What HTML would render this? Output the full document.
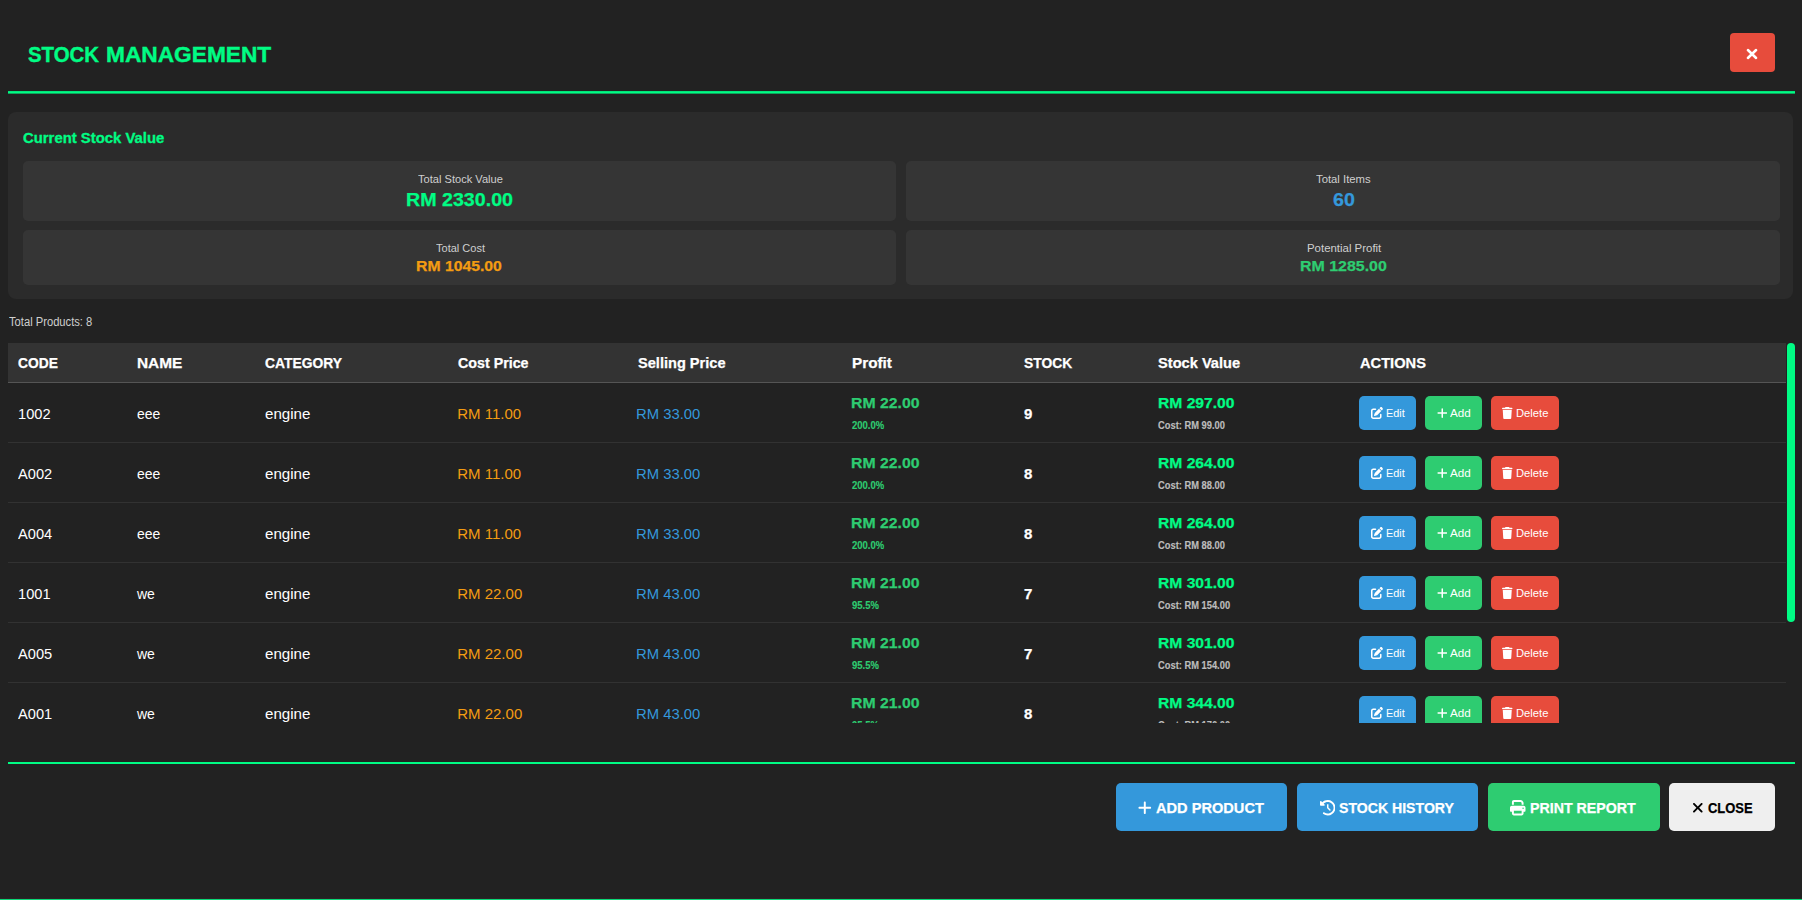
<!DOCTYPE html>
<html lang="en"><head><meta charset="utf-8"><title>Stock Management</title>
<style>
*{box-sizing:border-box;margin:0;padding:0}
html,body{width:1802px;height:900px;overflow:hidden;background:#222222}
body{font-family:"Liberation Sans",sans-serif;color:#fff;position:relative}
.abs{position:absolute}
.t{position:absolute;white-space:nowrap;color:#fff;transform-origin:0 0}
.title{font-size:21.5px;line-height:30px;font-weight:700;color:#00fc84;-webkit-text-stroke:0.4px #00fc84}
.ptitle{font-size:14.5px;line-height:20px;font-weight:700;color:#00fc84;-webkit-text-stroke:0.3px #00fc84}
.lab{font-size:11.5px;line-height:14px;color:#cfcfcf}
.vbig{-webkit-text-stroke:0.25px;font-size:19px;line-height:24px;font-weight:700}
.vsm{-webkit-text-stroke:0.25px;font-size:14.5px;line-height:18px;font-weight:700}
.tp{font-size:12px;line-height:14px;color:#cfcfcf}
.th{-webkit-text-stroke:0.25px;font-size:15px;line-height:18px;font-weight:700}
.cell{font-size:15px;line-height:18px}
.cellb{-webkit-text-stroke:0.25px;font-size:15px;line-height:18px;font-weight:700}
.pv{-webkit-text-stroke:0.25px;font-size:15px;line-height:18px;font-weight:700}
.pp{-webkit-text-stroke:0.15px;font-size:10px;line-height:12px;font-weight:700}
.bt{z-index:2;font-size:11.5px;line-height:14px}
.fbt{-webkit-text-stroke:0.25px;font-size:15px;line-height:18px;font-weight:700}
.box{position:absolute}
</style></head><body>
<span id="title" class="t title" style="left:28.00px;top:40px;transform:scaleX(0.948)">STOCK</span>
<span id="title2" class="t title" style="left:105.74px;top:40px;transform:scaleX(1.056)">MANAGEMENT</span>
<div class="box" style="left:1729.8px;top:33px;width:45.6px;height:39.2px;background:#e74c3c;border-radius:4px"></div>
<svg class="abs" viewBox="0 0 12 12" style="left:1746.1px;top:47.6px;width:12px;height:12px"><path d="M1.9 2L10.1 10M10.1 2L1.9 10" stroke="#fff" stroke-width="2.5" stroke-linecap="round" fill="none"/></svg>
<div class="box" style="left:8px;top:91px;width:1787px;height:3px;background:linear-gradient(to bottom,#03e47b 0,#03e47b 1px,#00fc84 1px,#00fc84 2px,#0ea45d 2px,#0ea45d 3px)"></div>
<div class="box" style="left:8px;top:112.4px;width:1785.2px;height:187px;background:#2b2b2b;border-radius:8px"></div>
<div class="box" style="left:22.5px;top:161px;width:873.5px;height:60px;background:#353535;border-radius:5px"></div>
<div class="box" style="left:906px;top:161px;width:873.5px;height:60px;background:#353535;border-radius:5px"></div>
<div class="box" style="left:22.5px;top:230px;width:873.5px;height:55px;background:#353535;border-radius:5px"></div>
<div class="box" style="left:906px;top:230px;width:873.5px;height:55px;background:#353535;border-radius:5px"></div>
<span id="ptitle" class="t ptitle" style="left:22.58px;top:128px;transform:scaleX(1.025)">Current Stock Value</span>
<span id="l1" class="t lab" style="left:417.96px;top:172px;transform:scaleX(0.965)">Total Stock Value</span>
<span id="l2" class="t lab" style="left:1316.46px;top:172px;transform:scaleX(0.983)">Total Items</span>
<span id="l3" class="t lab" style="left:435.92px;top:241px;transform:scaleX(0.959)">Total Cost</span>
<span id="l4" class="t lab" style="left:1306.50px;top:241px;transform:scaleX(0.993)">Potential Profit</span>
<span id="v1" class="t vbig" style="left:405.82px;top:188px;transform:scaleX(1.034);color:#00fc84">RM 2330.00</span>
<span id="v2" class="t vbig" style="left:1332.92px;top:188px;transform:scaleX(1.037);color:#3498db">60</span>
<span id="v3" class="t vsm" style="left:416.36px;top:257px;transform:scaleX(1.087);color:#f39c12">RM 1045.00</span>
<span id="v4" class="t vsm" style="left:1300.24px;top:257px;transform:scaleX(1.099);color:#2ecc71">RM 1285.00</span>
<span id="tp" class="t tp" style="left:8.58px;top:315px;transform:scaleX(0.932)">Total Products: 8</span>
<div class="box" style="left:8px;top:343px;width:1778px;height:380px;overflow:hidden">
<div class="box" style="left:-8px;top:-343px;width:1802px;height:900px">
<div class="box" style="left:8px;top:343px;width:1778px;height:40px;background:#333333;border-bottom:1px solid #555555"></div>
<span id="th0" class="t th" style="left:18.04px;top:354px;transform:scaleX(0.920)">CODE</span>
<span id="th1" class="t th" style="left:136.50px;top:354px;transform:scaleX(1.027)">NAME</span>
<span id="th2" class="t th" style="left:264.96px;top:354px;transform:scaleX(0.924)">CATEGORY</span>
<span id="th3" class="t th" style="left:458.00px;top:354px;transform:scaleX(0.950)">Cost Price</span>
<span id="th4" class="t th" style="left:637.92px;top:354px;transform:scaleX(0.972)">Selling Price</span>
<span id="th5" class="t th" style="left:851.50px;top:354px;transform:scaleX(1.020)">Profit</span>
<span id="th6" class="t th" style="left:1023.96px;top:354px;transform:scaleX(0.922)">STOCK</span>
<span id="th7" class="t th" style="left:1157.92px;top:354px;transform:scaleX(0.975)">Stock Value</span>
<span id="th8" class="t th" style="left:1360.00px;top:354px;transform:scaleX(0.977)">ACTIONS</span>
<div class="box" style="left:8px;top:442px;width:1778px;height:1px;background:#323232"></div>
<span id="r0c0" class="t cell" style="left:18.20px;top:405px;transform:scaleX(0.975)">1002</span>
<span id="r0c1" class="t cell" style="left:136.50px;top:405px;transform:scaleX(0.933)">eee</span>
<span id="r0c2" class="t cell" style="left:264.96px;top:405px;transform:scaleX(1.009)">engine</span>
<span id="r0c3" class="t cell" style="left:457.20px;top:405px;color:#f39c12">RM 11.00</span>
<span id="r0c4" class="t cell" style="left:636.32px;top:405px;transform:scaleX(0.989);color:#3498db">RM 33.00</span>
<span id="r0c5" class="t pv" style="left:850.70px;top:394px;transform:scaleX(1.054);color:#2ecc71">RM 22.00</span>
<span id="r0c6" class="t pp" style="left:851.50px;top:420px;transform:scaleX(0.949);color:#2ecc71">200.0%</span>
<span id="r0c7" class="t cellb" style="left:1024.00px;top:405px">9</span>
<span id="r0c8" class="t pv" style="left:1157.92px;top:394px;transform:scaleX(1.042);color:#00fc84">RM 297.00</span>
<span id="r0c9" class="t pp" style="left:1157.92px;top:420px;transform:scaleX(0.933);color:#bdbdbd">Cost: RM 99.00</span>
<span id="r0c10" class="t bt" style="left:1386.20px;top:405.5px;transform:scaleX(0.945)">Edit</span>
<div class="box" style="left:1359.2px;top:396px;width:57.2px;height:33.5px;background:#3498db;border-radius:5px"></div>
<svg class="abs" viewBox="0 0 512 512" style="left:1370.8px;top:407px;width:12px;height:12px;fill:#fff" preserveAspectRatio="none"><path d="M471.600 21.700c-21.900-21.900-57.300-21.900-79.200 0L362.300 51.700l97.900 97.900 30.100-30.100c21.900-21.900 21.900-57.300 0-79.200L471.600 21.700zm-299.200 220c-6.100 6.100-10.800 13.600-13.500 21.900l-29.600 88.800c-2.900 8.600-.600 18.100 5.800 24.600s15.900 8.700 24.600 5.800l88.800-29.600c8.200-2.700 15.700-7.400 21.900-13.500L437.700 172.300 339.700 74.300 172.400 241.700zM96 64C43 64 0 107 0 160V416c0 53 43 96 96 96H352c53 0 96-43 96-96V320c0-17.700-14.300-32-32-32s-32 14.300-32 32v96c0 17.700-14.300 32-32 32H96c-17.700 0-32-14.300-32-32V160c0-17.700 14.300-32 32-32h96c17.700 0 32-14.300 32-32s-14.300-32-32-32H96z"/></svg>
<div class="box" style="left:1425.1px;top:396px;width:57.1px;height:33.5px;background:#2ecc71;border-radius:5px"></div>
<svg class="abs" viewBox="0 0 448 512" style="left:1436.8px;top:407px;width:10.5px;height:12px;fill:#fff" preserveAspectRatio="none"><path d="M256 80c0-17.700-14.300-32-32-32s-32 14.300-32 32V224H48c-17.700 0-32 14.300-32 32s14.300 32 32 32H192V432c0 17.700 14.300 32 32 32s32-14.300 32-32V288H400c17.700 0 32-14.300 32-32s-14.300-32-32-32H256V80z"/></svg>
<div class="box" style="left:1490.7px;top:396px;width:68.7px;height:33.5px;background:#e74c3c;border-radius:5px"></div>
<svg class="abs" viewBox="0 0 448 512" style="left:1502px;top:407px;width:10.5px;height:12px;fill:#fff" preserveAspectRatio="none"><path d="M135.200 17.700L128 32H32C14.300 32 0 46.300 0 64S14.300 96 32 96H416c17.700 0 32-14.300 32-32s-14.300-32-32-32H320l-7.200-14.300C307.400 6.800 296.300 0 284.200 0H163.800c-12.100 0-23.200 6.800-28.600 17.700zM416 128H32L53.200 467c1.600 25.300 22.600 45 47.900 45H346.900c25.300 0 46.300-19.700 47.900-45L416 128z"/></svg>
<span id="r0c11" class="t bt" style="left:1450.42px;top:405.5px;transform:scaleX(1.016)">Add</span>
<span id="r0c12" class="t bt" style="left:1515.54px;top:405.5px;transform:scaleX(0.974)">Delete</span>
<div class="box" style="left:8px;top:502px;width:1778px;height:1px;background:#323232"></div>
<span id="r1c0" class="t cell" style="left:18.20px;top:465px;transform:scaleX(0.975)">A002</span>
<span id="r1c1" class="t cell" style="left:136.50px;top:465px;transform:scaleX(0.933)">eee</span>
<span id="r1c2" class="t cell" style="left:264.96px;top:465px;transform:scaleX(1.009)">engine</span>
<span id="r1c3" class="t cell" style="left:457.20px;top:465px;color:#f39c12">RM 11.00</span>
<span id="r1c4" class="t cell" style="left:636.32px;top:465px;transform:scaleX(0.989);color:#3498db">RM 33.00</span>
<span id="r1c5" class="t pv" style="left:850.70px;top:454px;transform:scaleX(1.054);color:#2ecc71">RM 22.00</span>
<span id="r1c6" class="t pp" style="left:851.50px;top:480px;transform:scaleX(0.949);color:#2ecc71">200.0%</span>
<span id="r1c7" class="t cellb" style="left:1024.00px;top:465px">8</span>
<span id="r1c8" class="t pv" style="left:1157.92px;top:454px;transform:scaleX(1.042);color:#00fc84">RM 264.00</span>
<span id="r1c9" class="t pp" style="left:1157.92px;top:480px;transform:scaleX(0.933);color:#bdbdbd">Cost: RM 88.00</span>
<span id="r1c10" class="t bt" style="left:1386.20px;top:465.5px;transform:scaleX(0.945)">Edit</span>
<div class="box" style="left:1359.2px;top:456px;width:57.2px;height:33.5px;background:#3498db;border-radius:5px"></div>
<svg class="abs" viewBox="0 0 512 512" style="left:1370.8px;top:467px;width:12px;height:12px;fill:#fff" preserveAspectRatio="none"><path d="M471.600 21.700c-21.900-21.900-57.300-21.900-79.200 0L362.300 51.700l97.900 97.900 30.100-30.100c21.900-21.900 21.900-57.300 0-79.200L471.600 21.700zm-299.200 220c-6.100 6.100-10.800 13.600-13.500 21.900l-29.600 88.800c-2.900 8.600-.600 18.100 5.800 24.600s15.900 8.700 24.600 5.800l88.800-29.600c8.200-2.700 15.700-7.400 21.900-13.500L437.700 172.300 339.700 74.300 172.400 241.700zM96 64C43 64 0 107 0 160V416c0 53 43 96 96 96H352c53 0 96-43 96-96V320c0-17.700-14.300-32-32-32s-32 14.300-32 32v96c0 17.700-14.300 32-32 32H96c-17.700 0-32-14.300-32-32V160c0-17.700 14.300-32 32-32h96c17.700 0 32-14.300 32-32s-14.300-32-32-32H96z"/></svg>
<div class="box" style="left:1425.1px;top:456px;width:57.1px;height:33.5px;background:#2ecc71;border-radius:5px"></div>
<svg class="abs" viewBox="0 0 448 512" style="left:1436.8px;top:467px;width:10.5px;height:12px;fill:#fff" preserveAspectRatio="none"><path d="M256 80c0-17.700-14.300-32-32-32s-32 14.300-32 32V224H48c-17.700 0-32 14.300-32 32s14.300 32 32 32H192V432c0 17.700 14.300 32 32 32s32-14.300 32-32V288H400c17.700 0 32-14.300 32-32s-14.300-32-32-32H256V80z"/></svg>
<div class="box" style="left:1490.7px;top:456px;width:68.7px;height:33.5px;background:#e74c3c;border-radius:5px"></div>
<svg class="abs" viewBox="0 0 448 512" style="left:1502px;top:467px;width:10.5px;height:12px;fill:#fff" preserveAspectRatio="none"><path d="M135.200 17.700L128 32H32C14.300 32 0 46.300 0 64S14.300 96 32 96H416c17.700 0 32-14.300 32-32s-14.300-32-32-32H320l-7.200-14.300C307.400 6.800 296.300 0 284.200 0H163.800c-12.100 0-23.200 6.800-28.600 17.700zM416 128H32L53.200 467c1.600 25.300 22.600 45 47.900 45H346.900c25.300 0 46.300-19.700 47.900-45L416 128z"/></svg>
<span id="r1c11" class="t bt" style="left:1450.42px;top:465.5px;transform:scaleX(1.016)">Add</span>
<span id="r1c12" class="t bt" style="left:1515.54px;top:465.5px;transform:scaleX(0.974)">Delete</span>
<div class="box" style="left:8px;top:562px;width:1778px;height:1px;background:#323232"></div>
<span id="r2c0" class="t cell" style="left:18.20px;top:525px;transform:scaleX(0.975)">A004</span>
<span id="r2c1" class="t cell" style="left:136.50px;top:525px;transform:scaleX(0.933)">eee</span>
<span id="r2c2" class="t cell" style="left:264.96px;top:525px;transform:scaleX(1.009)">engine</span>
<span id="r2c3" class="t cell" style="left:457.20px;top:525px;color:#f39c12">RM 11.00</span>
<span id="r2c4" class="t cell" style="left:636.32px;top:525px;transform:scaleX(0.989);color:#3498db">RM 33.00</span>
<span id="r2c5" class="t pv" style="left:850.70px;top:514px;transform:scaleX(1.054);color:#2ecc71">RM 22.00</span>
<span id="r2c6" class="t pp" style="left:851.50px;top:540px;transform:scaleX(0.949);color:#2ecc71">200.0%</span>
<span id="r2c7" class="t cellb" style="left:1024.00px;top:525px">8</span>
<span id="r2c8" class="t pv" style="left:1157.92px;top:514px;transform:scaleX(1.042);color:#00fc84">RM 264.00</span>
<span id="r2c9" class="t pp" style="left:1157.92px;top:540px;transform:scaleX(0.933);color:#bdbdbd">Cost: RM 88.00</span>
<span id="r2c10" class="t bt" style="left:1386.20px;top:525.5px;transform:scaleX(0.945)">Edit</span>
<div class="box" style="left:1359.2px;top:516px;width:57.2px;height:33.5px;background:#3498db;border-radius:5px"></div>
<svg class="abs" viewBox="0 0 512 512" style="left:1370.8px;top:527px;width:12px;height:12px;fill:#fff" preserveAspectRatio="none"><path d="M471.600 21.700c-21.900-21.900-57.300-21.900-79.200 0L362.300 51.700l97.900 97.900 30.100-30.100c21.900-21.900 21.900-57.300 0-79.200L471.600 21.700zm-299.200 220c-6.100 6.100-10.800 13.600-13.500 21.900l-29.600 88.800c-2.900 8.600-.600 18.100 5.800 24.600s15.900 8.700 24.600 5.800l88.800-29.600c8.200-2.700 15.700-7.400 21.900-13.500L437.700 172.300 339.700 74.300 172.400 241.700zM96 64C43 64 0 107 0 160V416c0 53 43 96 96 96H352c53 0 96-43 96-96V320c0-17.700-14.300-32-32-32s-32 14.300-32 32v96c0 17.700-14.300 32-32 32H96c-17.700 0-32-14.300-32-32V160c0-17.700 14.300-32 32-32h96c17.700 0 32-14.300 32-32s-14.300-32-32-32H96z"/></svg>
<div class="box" style="left:1425.1px;top:516px;width:57.1px;height:33.5px;background:#2ecc71;border-radius:5px"></div>
<svg class="abs" viewBox="0 0 448 512" style="left:1436.8px;top:527px;width:10.5px;height:12px;fill:#fff" preserveAspectRatio="none"><path d="M256 80c0-17.700-14.300-32-32-32s-32 14.300-32 32V224H48c-17.700 0-32 14.300-32 32s14.300 32 32 32H192V432c0 17.700 14.300 32 32 32s32-14.300 32-32V288H400c17.700 0 32-14.300 32-32s-14.300-32-32-32H256V80z"/></svg>
<div class="box" style="left:1490.7px;top:516px;width:68.7px;height:33.5px;background:#e74c3c;border-radius:5px"></div>
<svg class="abs" viewBox="0 0 448 512" style="left:1502px;top:527px;width:10.5px;height:12px;fill:#fff" preserveAspectRatio="none"><path d="M135.200 17.700L128 32H32C14.300 32 0 46.300 0 64S14.300 96 32 96H416c17.700 0 32-14.300 32-32s-14.300-32-32-32H320l-7.200-14.300C307.400 6.800 296.300 0 284.200 0H163.800c-12.100 0-23.200 6.800-28.600 17.700zM416 128H32L53.200 467c1.600 25.300 22.600 45 47.900 45H346.900c25.300 0 46.300-19.700 47.900-45L416 128z"/></svg>
<span id="r2c11" class="t bt" style="left:1450.42px;top:525.5px;transform:scaleX(1.016)">Add</span>
<span id="r2c12" class="t bt" style="left:1515.54px;top:525.5px;transform:scaleX(0.974)">Delete</span>
<div class="box" style="left:8px;top:622px;width:1778px;height:1px;background:#323232"></div>
<span id="r3c0" class="t cell" style="left:18.20px;top:585px;transform:scaleX(0.975)">1001</span>
<span id="r3c1" class="t cell" style="left:136.50px;top:585px;transform:scaleX(0.933)">we</span>
<span id="r3c2" class="t cell" style="left:264.96px;top:585px;transform:scaleX(1.009)">engine</span>
<span id="r3c3" class="t cell" style="left:457.20px;top:585px;color:#f39c12">RM 22.00</span>
<span id="r3c4" class="t cell" style="left:636.32px;top:585px;transform:scaleX(0.989);color:#3498db">RM 43.00</span>
<span id="r3c5" class="t pv" style="left:850.70px;top:574px;transform:scaleX(1.054);color:#2ecc71">RM 21.00</span>
<span id="r3c6" class="t pp" style="left:851.50px;top:600px;transform:scaleX(0.949);color:#2ecc71">95.5%</span>
<span id="r3c7" class="t cellb" style="left:1024.00px;top:585px">7</span>
<span id="r3c8" class="t pv" style="left:1157.92px;top:574px;transform:scaleX(1.042);color:#00fc84">RM 301.00</span>
<span id="r3c9" class="t pp" style="left:1157.92px;top:600px;transform:scaleX(0.933);color:#bdbdbd">Cost: RM 154.00</span>
<span id="r3c10" class="t bt" style="left:1386.20px;top:585.5px;transform:scaleX(0.945)">Edit</span>
<div class="box" style="left:1359.2px;top:576px;width:57.2px;height:33.5px;background:#3498db;border-radius:5px"></div>
<svg class="abs" viewBox="0 0 512 512" style="left:1370.8px;top:587px;width:12px;height:12px;fill:#fff" preserveAspectRatio="none"><path d="M471.600 21.700c-21.900-21.900-57.300-21.900-79.200 0L362.300 51.700l97.900 97.900 30.100-30.100c21.900-21.900 21.900-57.300 0-79.200L471.600 21.700zm-299.200 220c-6.100 6.100-10.800 13.600-13.500 21.900l-29.600 88.800c-2.900 8.600-.600 18.100 5.800 24.600s15.900 8.700 24.600 5.800l88.800-29.600c8.200-2.700 15.700-7.400 21.900-13.500L437.700 172.300 339.700 74.300 172.400 241.700zM96 64C43 64 0 107 0 160V416c0 53 43 96 96 96H352c53 0 96-43 96-96V320c0-17.700-14.300-32-32-32s-32 14.300-32 32v96c0 17.700-14.300 32-32 32H96c-17.700 0-32-14.300-32-32V160c0-17.700 14.300-32 32-32h96c17.700 0 32-14.300 32-32s-14.300-32-32-32H96z"/></svg>
<div class="box" style="left:1425.1px;top:576px;width:57.1px;height:33.5px;background:#2ecc71;border-radius:5px"></div>
<svg class="abs" viewBox="0 0 448 512" style="left:1436.8px;top:587px;width:10.5px;height:12px;fill:#fff" preserveAspectRatio="none"><path d="M256 80c0-17.700-14.300-32-32-32s-32 14.300-32 32V224H48c-17.700 0-32 14.300-32 32s14.300 32 32 32H192V432c0 17.700 14.300 32 32 32s32-14.300 32-32V288H400c17.700 0 32-14.300 32-32s-14.300-32-32-32H256V80z"/></svg>
<div class="box" style="left:1490.7px;top:576px;width:68.7px;height:33.5px;background:#e74c3c;border-radius:5px"></div>
<svg class="abs" viewBox="0 0 448 512" style="left:1502px;top:587px;width:10.5px;height:12px;fill:#fff" preserveAspectRatio="none"><path d="M135.200 17.700L128 32H32C14.300 32 0 46.300 0 64S14.300 96 32 96H416c17.700 0 32-14.300 32-32s-14.300-32-32-32H320l-7.200-14.300C307.400 6.800 296.300 0 284.200 0H163.800c-12.100 0-23.200 6.800-28.600 17.700zM416 128H32L53.200 467c1.600 25.300 22.600 45 47.900 45H346.900c25.300 0 46.300-19.700 47.900-45L416 128z"/></svg>
<span id="r3c11" class="t bt" style="left:1450.42px;top:585.5px;transform:scaleX(1.016)">Add</span>
<span id="r3c12" class="t bt" style="left:1515.54px;top:585.5px;transform:scaleX(0.974)">Delete</span>
<div class="box" style="left:8px;top:682px;width:1778px;height:1px;background:#323232"></div>
<span id="r4c0" class="t cell" style="left:18.20px;top:645px;transform:scaleX(0.975)">A005</span>
<span id="r4c1" class="t cell" style="left:136.50px;top:645px;transform:scaleX(0.933)">we</span>
<span id="r4c2" class="t cell" style="left:264.96px;top:645px;transform:scaleX(1.009)">engine</span>
<span id="r4c3" class="t cell" style="left:457.20px;top:645px;color:#f39c12">RM 22.00</span>
<span id="r4c4" class="t cell" style="left:636.32px;top:645px;transform:scaleX(0.989);color:#3498db">RM 43.00</span>
<span id="r4c5" class="t pv" style="left:850.70px;top:634px;transform:scaleX(1.054);color:#2ecc71">RM 21.00</span>
<span id="r4c6" class="t pp" style="left:851.50px;top:660px;transform:scaleX(0.949);color:#2ecc71">95.5%</span>
<span id="r4c7" class="t cellb" style="left:1024.00px;top:645px">7</span>
<span id="r4c8" class="t pv" style="left:1157.92px;top:634px;transform:scaleX(1.042);color:#00fc84">RM 301.00</span>
<span id="r4c9" class="t pp" style="left:1157.92px;top:660px;transform:scaleX(0.933);color:#bdbdbd">Cost: RM 154.00</span>
<span id="r4c10" class="t bt" style="left:1386.20px;top:645.5px;transform:scaleX(0.945)">Edit</span>
<div class="box" style="left:1359.2px;top:636px;width:57.2px;height:33.5px;background:#3498db;border-radius:5px"></div>
<svg class="abs" viewBox="0 0 512 512" style="left:1370.8px;top:647px;width:12px;height:12px;fill:#fff" preserveAspectRatio="none"><path d="M471.600 21.700c-21.900-21.900-57.300-21.900-79.200 0L362.300 51.700l97.900 97.900 30.100-30.100c21.900-21.900 21.900-57.300 0-79.200L471.600 21.700zm-299.200 220c-6.100 6.100-10.800 13.600-13.500 21.900l-29.600 88.800c-2.900 8.600-.600 18.100 5.800 24.600s15.900 8.700 24.600 5.800l88.800-29.600c8.200-2.700 15.700-7.400 21.900-13.500L437.700 172.300 339.700 74.300 172.400 241.700zM96 64C43 64 0 107 0 160V416c0 53 43 96 96 96H352c53 0 96-43 96-96V320c0-17.700-14.300-32-32-32s-32 14.300-32 32v96c0 17.700-14.300 32-32 32H96c-17.700 0-32-14.300-32-32V160c0-17.700 14.300-32 32-32h96c17.700 0 32-14.300 32-32s-14.300-32-32-32H96z"/></svg>
<div class="box" style="left:1425.1px;top:636px;width:57.1px;height:33.5px;background:#2ecc71;border-radius:5px"></div>
<svg class="abs" viewBox="0 0 448 512" style="left:1436.8px;top:647px;width:10.5px;height:12px;fill:#fff" preserveAspectRatio="none"><path d="M256 80c0-17.700-14.300-32-32-32s-32 14.300-32 32V224H48c-17.700 0-32 14.300-32 32s14.300 32 32 32H192V432c0 17.700 14.300 32 32 32s32-14.300 32-32V288H400c17.700 0 32-14.300 32-32s-14.300-32-32-32H256V80z"/></svg>
<div class="box" style="left:1490.7px;top:636px;width:68.7px;height:33.5px;background:#e74c3c;border-radius:5px"></div>
<svg class="abs" viewBox="0 0 448 512" style="left:1502px;top:647px;width:10.5px;height:12px;fill:#fff" preserveAspectRatio="none"><path d="M135.200 17.700L128 32H32C14.300 32 0 46.300 0 64S14.300 96 32 96H416c17.700 0 32-14.300 32-32s-14.300-32-32-32H320l-7.200-14.300C307.400 6.800 296.300 0 284.200 0H163.800c-12.100 0-23.200 6.800-28.600 17.700zM416 128H32L53.200 467c1.600 25.300 22.600 45 47.900 45H346.900c25.300 0 46.300-19.700 47.900-45L416 128z"/></svg>
<span id="r4c11" class="t bt" style="left:1450.42px;top:645.5px;transform:scaleX(1.016)">Add</span>
<span id="r4c12" class="t bt" style="left:1515.54px;top:645.5px;transform:scaleX(0.974)">Delete</span>
<div class="box" style="left:8px;top:742px;width:1778px;height:1px;background:#323232"></div>
<span id="r5c0" class="t cell" style="left:18.20px;top:705px;transform:scaleX(0.975)">A001</span>
<span id="r5c1" class="t cell" style="left:136.50px;top:705px;transform:scaleX(0.933)">we</span>
<span id="r5c2" class="t cell" style="left:264.96px;top:705px;transform:scaleX(1.009)">engine</span>
<span id="r5c3" class="t cell" style="left:457.20px;top:705px;color:#f39c12">RM 22.00</span>
<span id="r5c4" class="t cell" style="left:636.32px;top:705px;transform:scaleX(0.989);color:#3498db">RM 43.00</span>
<span id="r5c5" class="t pv" style="left:850.70px;top:694px;transform:scaleX(1.054);color:#2ecc71">RM 21.00</span>
<span id="r5c6" class="t pp" style="left:851.50px;top:720px;transform:scaleX(0.949);color:#2ecc71">95.5%</span>
<span id="r5c7" class="t cellb" style="left:1024.00px;top:705px">8</span>
<span id="r5c8" class="t pv" style="left:1157.92px;top:694px;transform:scaleX(1.042);color:#00fc84">RM 344.00</span>
<span id="r5c9" class="t pp" style="left:1157.92px;top:720px;transform:scaleX(0.933);color:#bdbdbd">Cost: RM 176.00</span>
<span id="r5c10" class="t bt" style="left:1386.20px;top:705.5px;transform:scaleX(0.945)">Edit</span>
<div class="box" style="left:1359.2px;top:696px;width:57.2px;height:33.5px;background:#3498db;border-radius:5px"></div>
<svg class="abs" viewBox="0 0 512 512" style="left:1370.8px;top:707px;width:12px;height:12px;fill:#fff" preserveAspectRatio="none"><path d="M471.600 21.700c-21.900-21.900-57.300-21.900-79.200 0L362.300 51.700l97.900 97.900 30.100-30.100c21.900-21.900 21.900-57.300 0-79.200L471.600 21.700zm-299.200 220c-6.100 6.100-10.800 13.600-13.500 21.900l-29.600 88.800c-2.900 8.600-.600 18.100 5.800 24.600s15.900 8.700 24.600 5.800l88.800-29.600c8.200-2.700 15.700-7.400 21.900-13.500L437.700 172.300 339.700 74.300 172.400 241.700zM96 64C43 64 0 107 0 160V416c0 53 43 96 96 96H352c53 0 96-43 96-96V320c0-17.700-14.300-32-32-32s-32 14.300-32 32v96c0 17.700-14.300 32-32 32H96c-17.700 0-32-14.300-32-32V160c0-17.700 14.300-32 32-32h96c17.700 0 32-14.300 32-32s-14.300-32-32-32H96z"/></svg>
<div class="box" style="left:1425.1px;top:696px;width:57.1px;height:33.5px;background:#2ecc71;border-radius:5px"></div>
<svg class="abs" viewBox="0 0 448 512" style="left:1436.8px;top:707px;width:10.5px;height:12px;fill:#fff" preserveAspectRatio="none"><path d="M256 80c0-17.700-14.300-32-32-32s-32 14.300-32 32V224H48c-17.700 0-32 14.300-32 32s14.300 32 32 32H192V432c0 17.700 14.300 32 32 32s32-14.300 32-32V288H400c17.700 0 32-14.300 32-32s-14.300-32-32-32H256V80z"/></svg>
<div class="box" style="left:1490.7px;top:696px;width:68.7px;height:33.5px;background:#e74c3c;border-radius:5px"></div>
<svg class="abs" viewBox="0 0 448 512" style="left:1502px;top:707px;width:10.5px;height:12px;fill:#fff" preserveAspectRatio="none"><path d="M135.200 17.700L128 32H32C14.300 32 0 46.300 0 64S14.300 96 32 96H416c17.700 0 32-14.300 32-32s-14.300-32-32-32H320l-7.200-14.300C307.400 6.800 296.300 0 284.200 0H163.800c-12.100 0-23.200 6.800-28.600 17.700zM416 128H32L53.200 467c1.600 25.300 22.600 45 47.900 45H346.900c25.300 0 46.300-19.700 47.900-45L416 128z"/></svg>
<span id="r5c11" class="t bt" style="left:1450.42px;top:705.5px;transform:scaleX(1.016)">Add</span>
<span id="r5c12" class="t bt" style="left:1515.54px;top:705.5px;transform:scaleX(0.974)">Delete</span>
</div></div>
<div class="box" style="left:1786.7px;top:342.8px;width:8.2px;height:279.2px;border-radius:4.1px;background:#00fc84"></div>
<div class="box" style="left:8px;top:762px;width:1787px;height:2px;background:#00fc84"></div>
<div class="box" style="left:1115.5px;top:783px;width:171.5px;height:47.5px;background:#3498db;border-radius:5px"></div>
<div class="box" style="left:1296.5px;top:783px;width:181.8px;height:47.5px;background:#3498db;border-radius:5px"></div>
<div class="box" style="left:1488px;top:783px;width:171.5px;height:47.5px;background:#2ecc71;border-radius:5px"></div>
<div class="box" style="left:1668.8px;top:783px;width:106.6px;height:47.5px;background:#efefef;border-radius:5px"></div>
<svg class="abs" viewBox="0 0 448 512" style="left:1138.2px;top:800px;width:13.6px;height:15.5px;fill:#fff" preserveAspectRatio="none"><path d="M256 80c0-17.700-14.300-32-32-32s-32 14.300-32 32V224H48c-17.700 0-32 14.300-32 32s14.300 32 32 32H192V432c0 17.700 14.300 32 32 32s32-14.300 32-32V288H400c17.700 0 32-14.300 32-32s-14.300-32-32-32H256V80z"/></svg>
<svg class="abs" viewBox="0 0 512 512" style="left:1319.5px;top:800px;width:15.5px;height:15.5px;fill:#fff" preserveAspectRatio="none"><path d="M75 75L41 41C25.900 25.900 0 36.600 0 57.900V168c0 13.300 10.700 24 24 24H134.100c21.400 0 32.100-25.900 17-41l-30.800-30.800C155 85.500 203 64 256 64c106 0 192 86 192 192s-86 192-192 192c-40.800 0-78.600-12.700-109.700-34.400c-14.500-10.100-34.400-6.600-44.600 7.900s-6.600 34.400 7.900 44.600C151.200 495 201.700 512 256 512c141.400 0 256-114.600 256-256S397.400 0 256 0C185.300 0 121.300 28.700 75 75zm181 53c-13.300 0-24 10.700-24 24V256c0 6.400 2.500 12.500 7 17l72 72c9.400 9.400 24.600 9.400 33.900 0s9.400-24.600 0-33.900l-65-65V152c0-13.300-10.700-24-24-24z"/></svg>
<svg class="abs" viewBox="0 0 512 512" style="left:1510px;top:800px;width:15.5px;height:15.5px;fill:#fff" preserveAspectRatio="none"><path d="M128 0C92.700 0 64 28.700 64 64v96h64V64H354.700L384 93.300V160h64V93.300c0-17-6.700-33.300-18.700-45.300L400 18.700C388 6.700 371.700 0 354.700 0H128zM384 352v32 64H128V384 368 352H384zm64 32h32c17.700 0 32-14.300 32-32V256c0-35.300-28.700-64-64-64H64c-35.300 0-64 28.700-64 64v96c0 17.700 14.300 32 32 32H64v64c0 35.300 28.700 64 64 64H384c35.300 0 64-28.700 64-64V384zM432 248a24 24 0 1 1 0 48 24 24 0 1 1 0-48z"/></svg>
<svg class="abs" viewBox="0 0 384 512" style="left:1691.5px;top:800px;width:11.6px;height:15.5px;fill:#000" preserveAspectRatio="none"><path d="M342.600 150.600c12.500-12.500 12.500-32.800 0-45.300s-32.800-12.500-45.300 0L192 210.700 86.600 105.400c-12.500-12.500-32.800-12.500-45.300 0s-12.500 32.800 0 45.300L146.700 256 41.400 361.400c-12.500 12.500-12.500 32.800 0 45.300s32.800 12.500 45.300 0L192 301.300 297.400 406.600c12.500 12.500 32.800 12.500 45.300 0s12.500-32.800 0-45.300L237.300 256 342.600 150.600z"/></svg>
<span id="f1" class="t fbt" style="left:1156.46px;top:799px;transform:scaleX(0.973)">ADD PRODUCT</span>
<span id="f2" class="t fbt" style="left:1339.46px;top:799px;transform:scaleX(0.940)">STOCK HISTORY</span>
<span id="f3" class="t fbt" style="left:1530.46px;top:799px;transform:scaleX(0.947)">PRINT REPORT</span>
<span id="f4" class="t fbt" style="left:1707.92px;top:799px;transform:scaleX(0.863);color:#000">CLOSE</span>
<div class="box" style="left:0;top:898px;width:1802px;height:1px;background:#2e2226"></div><div class="box" style="left:0;top:899px;width:1802px;height:1px;background:#0bd877"></div>
</body></html>
